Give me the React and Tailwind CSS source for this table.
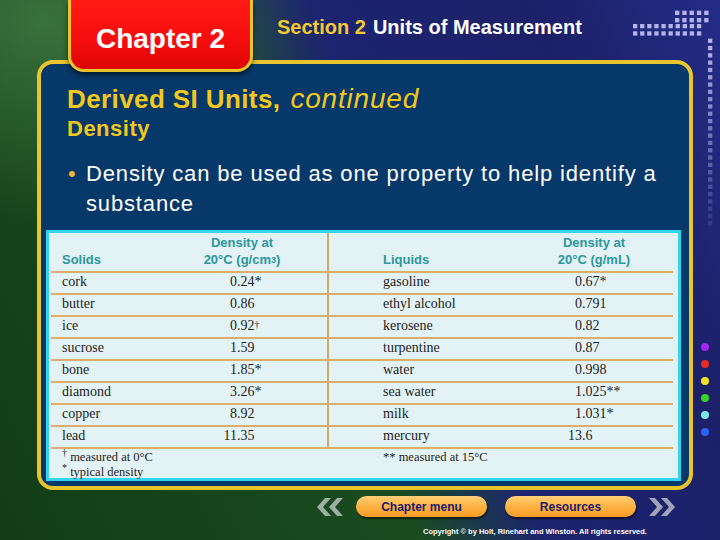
import React from 'react';

const solids = [
  { name: 'cork', int: '0', frac: '24', mark: '*' },
  { name: 'butter', int: '0', frac: '86' },
  { name: 'ice', int: '0', frac: '92', sup: '†' },
  { name: 'sucrose', int: '1', frac: '59' },
  { name: 'bone', int: '1', frac: '85', mark: '*' },
  { name: 'diamond', int: '3', frac: '26', mark: '*' },
  { name: 'copper', int: '8', frac: '92' },
  { name: 'lead', int: '11', frac: '35' },
];

const liquids = [
  { name: 'gasoline', int: '0', frac: '67', mark: '*' },
  { name: 'ethyl alcohol', int: '0', frac: '791' },
  { name: 'kerosene', int: '0', frac: '82' },
  { name: 'turpentine', int: '0', frac: '87' },
  { name: 'water', int: '0', frac: '998' },
  { name: 'sea water', int: '1', frac: '025', mark: '**' },
  { name: 'milk', int: '1', frac: '031', mark: '*' },
  { name: 'mercury', int: '13', frac: '6' },
];

const sideDots = ['#a424f0', '#e82a22', '#f2e02a', '#3ad22a', '#78e8e6', '#2a64f2'];

// decimal-aligned number: integer part in a fixed box, extra digits spill left
const Value = ({ v, intW }) => (
  <span className="flex">
    <span className={`flex justify-end ${intW}`}>{v.int}</span>
    <span>
      .{v.frac}
      {v.mark}
      {v.sup && <sup className="text-[10px] relative -top-[2px]">{v.sup}</sup>}
    </span>
  </span>
);

const Chevrons = ({ flip }) => (
  <svg width="30" height="20" viewBox="0 0 30 20" className={flip ? 'scale-x-[-1]' : ''}>
    <polygon points="10,1 16,1 8,10 16,19 10,19 2,10" fill="#c9d0cf" opacity="0.75" />
    <polygon points="22,1 28,1 20,10 28,19 22,19 14,10" fill="#c9d0cf" opacity="0.75" />
  </svg>
);

const CornerDots = () => {
  const sq = [];
  [10.7, 18].forEach((y) => {
    for (let i = 0; i < 5; i++) sq.push([675 + i * 7.3, y, 1]);
  });
  [24, 31.3].forEach((y) => {
    for (let i = 0; i < 10; i++) sq.push([633 + i * 7.1, y, 1]);
  });
  for (let j = 0; j < 26; j++) sq.push([708, 38.6 + j * 7.3, Math.max(0.15, 1 - j * 0.035)]);
  return (
    <svg className="absolute top-0 left-0 pointer-events-none" width="720" height="240">
      {sq.map(([x, y, o], i) => (
        <rect key={i} x={x} y={y} width="4.3" height="4.3" fill="#b4b4ec" opacity={o} />
      ))}
    </svg>
  );
};

export default function App() {
  return (
    <div className="relative w-[720px] h-[540px] overflow-hidden bg-[linear-gradient(66deg,#123d15_0%,#1a4c20_44%,#1b3a48_50%,#1d2470_57%,#1c2068_80%,#252c86_100%)] font-['Liberation_Sans',Arial,sans-serif]">
      <div className="w-full h-full flex flex-col bg-[radial-gradient(ellipse_at_6%_4%,rgba(120,190,120,0.35),transparent_28%)]">
        {/* header */}
        <div className="h-[60px] flex items-start">
          <div className="relative z-10 ml-[68px] w-[185px] h-[72px] shrink-0 pt-[9px] rounded-b-[16px] border-[3px] border-t-0 border-[#e8c42c] bg-[linear-gradient(180deg,#ff1c14_0%,#f50d0d_60%,#dd0505_100%)] shadow-[0_3px_5px_rgba(0,0,0,0.55)] flex items-center justify-center">
            <span className="text-white font-bold text-[28px] leading-none">Chapter 2</span>
          </div>
          <div className="ml-[24px] pt-[15px] text-[20px] leading-[24px] font-bold">
            <span className="text-[#f2c834]">Section 2</span>
            <span className="text-white ml-[7px]">Units of Measurement</span>
          </div>
        </div>

        {/* main panel */}
        <div className="ml-[37px] w-[656px] h-[430px] shrink-0 rounded-[16px] border-4 border-[#e9c42c] bg-[#07386a] flex flex-col">
          <div className="pl-[26px] pt-[20px] leading-[30px] text-[#f2c81e] flex items-baseline">
            <span className="font-bold text-[26px] tracking-[0.4px]">Derived SI Units,</span>
            <span className="italic text-[28px] tracking-[0.8px] ml-[10px]">continued</span>
          </div>
          <div className="pl-[26px] mt-[2px] text-[22px] leading-[26px] font-bold tracking-[0.5px] text-[#f2c81e]">Density</div>
          <div className="flex mt-[17px] pl-[27px] pr-[20px] text-[22px] leading-[29.5px] tracking-[0.85px] text-white">
            <span className="w-[18px] shrink-0 text-[#e8b830]">•</span>
            <span>Density can be used as one property to help identify a substance</span>
          </div>

          {/* table */}
          <div className="mt-[12px] ml-[5px] w-[635px] h-[251px] shrink-0 border-[3px] border-[#33d4ee] bg-[#e3f3f5] flex flex-col font-['Liberation_Serif','Times_New_Roman',serif] text-[14px] text-[#1c1c1c]">
            <div className="flex">
              <div className="ml-[2px] w-[278px] border-r-2 border-[#d8a868]">
                <div className="h-[40px] flex items-end border-b-2 border-[#dcae6e] pb-[3px] font-['Liberation_Sans',Arial,sans-serif] font-bold text-[13px] leading-[17px] text-[#2b979d]">
                  <span className="w-[120px] pl-[11px]">Solids</span>
                  <span className="w-[142px] text-center">
                    Density at
                    <br />
                    20°C (g/cm<sup className="text-[9px] relative -top-[1px]">3</sup>)
                  </span>
                </div>
                {solids.map((r) => (
                  <div key={r.name} className="h-[22px] flex border-b-2 border-[#dcae6e] leading-[18px]">
                    <span className="w-[175px] pl-[11px]">{r.name}</span>
                    <Value v={r} intW="w-[11px]" />
                  </div>
                ))}
              </div>
              <div className="flex-1 mr-[5px]">
                <div className="h-[40px] flex items-end border-b-2 border-[#dcae6e] pb-[3px] font-['Liberation_Sans',Arial,sans-serif] font-bold text-[13px] leading-[17px] text-[#2b979d]">
                  <span className="w-[200px] pl-[54px]">Liquids</span>
                  <span className="w-[130px] text-center">
                    Density at
                    <br />
                    20°C (g/mL)
                  </span>
                </div>
                {liquids.map((r) => (
                  <div key={r.name} className="h-[22px] flex border-b-2 border-[#dcae6e] leading-[18px]">
                    <span className="w-[240px] pl-[54px]">{r.name}</span>
                    <Value v={r} intW="w-[13px]" />
                  </div>
                ))}
              </div>
            </div>
            <div className="flex text-[12.5px] leading-[15px] pt-[1px]">
              <div className="w-[334px] pl-[13px]">
                <div>
                  <sup className="text-[10px]">†</sup> measured at 0°C
                </div>
                <div>
                  <sup className="text-[10px]">*</sup> typical density
                </div>
              </div>
              <div>** measured at 15°C</div>
            </div>
          </div>
        </div>

        {/* bottom navigation */}
        <div className="flex items-center ml-[315px] mt-[6px]">
          <Chevrons />
          <button className="ml-[11px] w-[131px] h-[21px] rounded-[11px] bg-[linear-gradient(180deg,#ffcf78_0%,#ffb545_45%,#f59b25_100%)] shadow-[1px_2px_2px_rgba(0,0,0,0.55)] text-[#1b1a6e] font-bold text-[12px] leading-none">
            Chapter menu
          </button>
          <button className="ml-[18px] w-[131px] h-[21px] rounded-[11px] bg-[linear-gradient(180deg,#ffcf78_0%,#ffb545_45%,#f59b25_100%)] shadow-[1px_2px_2px_rgba(0,0,0,0.55)] text-[#1b1a6e] font-bold text-[12px] leading-none">
            Resources
          </button>
          <div className="ml-[11px]">
            <Chevrons flip />
          </div>
        </div>
        <div className="ml-[423px] mt-[10px] text-[7.5px] leading-[10px] text-white font-bold">
          Copyright © by Holt, Rinehart and Winston. All rights reserved.
        </div>
      </div>

      <CornerDots />

      <div className="absolute left-[701px] top-[343px] flex flex-col gap-[9px]">
        {sideDots.map((c) => (
          <span key={c} className="block w-[8px] h-[8px] rounded-full" style={{ backgroundColor: c }} />
        ))}
      </div>
    </div>
  );
}
